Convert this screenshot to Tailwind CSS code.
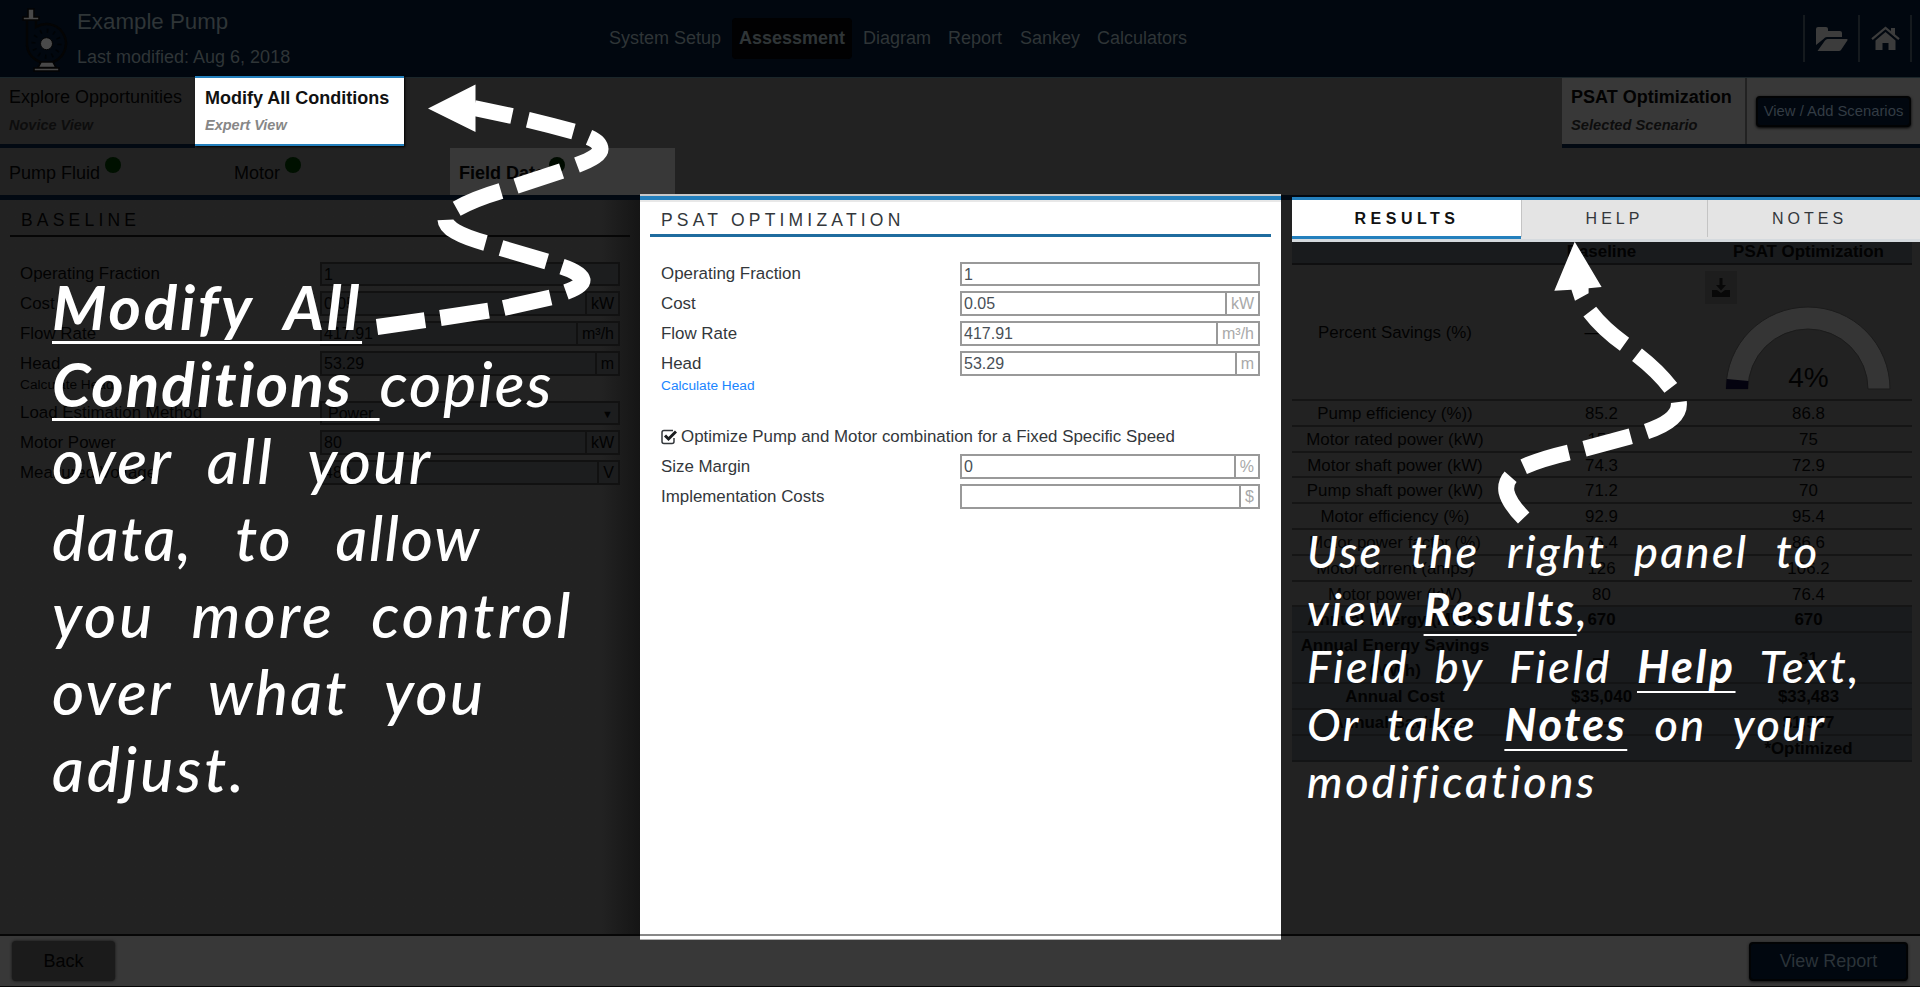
<!DOCTYPE html>
<html lang="en">
<head>
<meta charset="utf-8">
<title>Example Pump - Assessment</title>
<script src="https://cdn.jsdelivr.net/npm/@tailwindcss/browser@4"></script>
</head>
<body class="relative flex h-[987px] w-[1920px] flex-col overflow-hidden bg-[#222222] font-['Liberation_Sans',Arial,sans-serif] text-[16.900px] text-[#020202]">

<!-- Header -->
<header class="flex h-[78px] shrink-0 items-center border-b border-[#1b262a] bg-[#01070f] text-[18px] text-[#2f3537]">
  <svg class="ml-[22px] h-[66px] w-[46px] shrink-0" viewBox="22 4 46 66" fill="none">
    <path d="M27 19V43A19.500 19.500 0 1 0 36 25V19" fill="#01070f" stroke="#040404" stroke-width="2.500"/>
    <circle cx="46.500" cy="41.700" r="13" stroke="#010305" stroke-width="4" stroke-dasharray="1.500 5.300"/>
    <path d="M28 7h6v8h5v3H23v-3h5zM41 60h12l3 5.500H38zM34 66h25v3H34z" fill="#484848" stroke="#040404" stroke-width="1.600"/>
    <circle cx="46.500" cy="41.700" r="6" fill="#4a4a4a" stroke="#040404"/>
  </svg>
  <div class="ml-[9px] w-[524px]">
    <div class="text-[22.300px] leading-[38px]">Example Pump</div>
    <div class="leading-[33px]">Last modified: Aug 6, 2018</div>
  </div>
  <nav class="flex h-[41px] items-center">
    <a class="ml-[8px] w-[123px]">System Setup</a>
    <a class="flex h-[41px] w-[120px] items-center justify-center rounded bg-[#010102] font-bold">Assessment</a>
    <a class="ml-[11px] w-[85px]">Diagram</a>
    <a class="w-[72px]">Report</a>
    <a class="w-[77px]">Sankey</a>
    <a>Calculators</a>
  </nav>
  <div class="ml-auto mr-[8px] flex h-[47px] items-center border-l-2 border-r-2 border-[#151a1e]">
    <div class="flex h-full w-[55px] items-center justify-center border-r-2 border-[#151a1e]">
      <svg class="h-[26px] w-[33px]" viewBox="0 0 33 26" fill="#3c3c3c"><path d="M1 19V3Q1 1 3 1h8q2 0 2 2v2h12q2 0 2 2v4H12q-2 0-3.500 2zM2.500 25 10 14.500q1-1.500 2.500-1.500H32q1 .2.500 1.200L26 24q-.7 1-2 1z"/></svg>
    </div>
    <div class="flex h-full w-[50px] items-center justify-center">
      <svg class="h-[25px] w-[29px]" viewBox="0 0 29 25" fill="#3c3c3c"><path d="M14.500 6 4.500 14.500V24h7v-7h6v7h7v-9.500z"/><path d="M1 13.200 14.500 2 28 13.200" fill="none" stroke="#3c3c3c" stroke-width="2.200"/><path d="M20 2h4v9l-4-3.500z"/></svg>
    </div>
  </div>
</header>

<!-- Condition views -->
<section class="flex h-[70px] shrink-0 leading-[23px]">
  <div class="h-full w-[195px] border-b-4 border-[#020912] pl-[9px] pt-[8px]">
    <div class="text-[18px]">Explore Opportunities</div>
    <div class="mt-[5px] text-[14.500px] font-bold italic text-[#0d0d0d]">Novice View</div>
  </div>
  <div class="relative z-10 -mt-[2px] h-[70px] w-[209px] border-b-[2px] border-t-2 border-[#2480bd] bg-white pl-[10px] pt-[9px] shadow-[1px_1px_2px_#000]">
    <div class="text-[18px] font-bold text-[#111111]">Modify All Conditions</div>
    <div class="mt-[4px] text-[14.500px] font-bold italic text-[#878787]">Expert View</div>
  </div>
  <div class="ml-auto flex h-full w-[358px] border-b-4 border-[#020912] bg-[#383838]">
    <div class="h-full w-[185px] border-r-2 border-[#222222] pl-[9px] pt-[8px]">
      <div class="text-[18px] font-bold">PSAT Optimization</div>
      <div class="mt-[5px] text-[14.700px] font-bold italic text-[#0d0d0d]">Selected Scenario</div>
    </div>
    <div class="ml-[9px] mt-[18px] flex h-[31px] w-[155px] items-center justify-center rounded-sm border-2 border-[#020304] bg-[#01070f] text-[14.800px] text-[#333c44] shadow-[0_1px_3px_#000]">View / Add Scenarios</div>
  </div>
</section>

<!-- Data tabs -->
<section class="flex h-[52px] shrink-0 border-b-[5px] border-[#020912] text-[18px]">
  <div class="flex w-[225px] pl-[9px] pt-[9px] leading-[33px]">Pump Fluid<i class="ml-[5px] size-4 rounded-full bg-[#001000]"></i></div>
  <div class="flex w-[225px] pl-[9px] pt-[9px] leading-[33px]">Motor<i class="ml-[5px] size-4 rounded-full bg-[#001000]"></i></div>
  <div class="flex w-[225px] bg-[#383838] pl-[9px] pt-[9px] font-bold leading-[33px]">Field Data<i class="ml-[4px] size-4 rounded-full bg-[#000b00]"></i></div>
</section>

<main class="flex h-[734px] shrink-0">
  <!-- Baseline -->
  <section class="h-full w-[640px] bg-linear-to-r from-[#222222] from-94% to-[#151515] px-[10px] pt-[7px]">
    <h2 class="h-[30px] border-b-2 border-[#060606] pl-[11px] text-[17.500px] leading-[27px] tracking-[4.200px]">BASELINE</h2>
    <div class="mt-[24.500px] flex flex-col gap-[5px] pl-[10px] pr-[10px]">
      <div class="flex h-[24.800px] items-center justify-between"><label>Operating Fraction</label><div class="h-[24.800px] w-[300px] border-2 border-[#111111] bg-[#1c1d1e] pl-[2px] text-[16px] leading-[21px]">1</div></div>
      <div class="flex h-[24.800px] items-center justify-between"><label>Cost</label><div class="flex h-[24.800px] w-[300px] border-2 border-[#111111] bg-[#1c1d1e] pl-[2px] text-[16px] leading-[21px]">0.05<span class="ml-auto border-l-2 border-[#111111] px-[4px]">kW</span></div></div>
      <div class="flex h-[24.800px] items-center justify-between"><label>Flow Rate</label><div class="flex h-[24.800px] w-[300px] border-2 border-[#111111] bg-[#1c1d1e] pl-[2px] text-[16px] leading-[21px]">417.91<span class="ml-auto border-l-2 border-[#111111] px-[4px]">m³/h</span></div></div>
      <div class="flex h-[24.800px] items-center justify-between"><label>Head</label><div class="flex h-[24.800px] w-[300px] border-2 border-[#111111] bg-[#1c1d1e] pl-[2px] text-[16px] leading-[21px]">53.29<span class="ml-auto border-l-2 border-[#111111] px-[4px]">m</span></div></div>
      <div class="-mt-[5px] h-[20px] text-[13.700px] leading-[18px]">Calculate Head</div>
      <div class="flex h-[24.800px] items-center justify-between"><label>Load Estimation Method</label><div class="flex h-[24.800px] w-[300px] justify-between border-2 border-[#111111] bg-[#1c1d1e] pl-[6px] pr-[5px] text-[16px] leading-[22px]">Power<span class="text-[11px]">▼</span></div></div>
      <div class="flex h-[24.800px] items-center justify-between"><label>Motor Power</label><div class="flex h-[24.800px] w-[300px] border-2 border-[#111111] bg-[#1c1d1e] pl-[2px] text-[16px] leading-[21px]">80<span class="ml-auto border-l-2 border-[#111111] px-[4px]">kW</span></div></div>
      <div class="flex h-[24.800px] items-center justify-between"><label>Measured Voltage</label><div class="flex h-[24.800px] w-[300px] border-2 border-[#111111] bg-[#1c1d1e] pl-[2px] text-[16px] leading-[21px]">480<span class="ml-auto border-l-2 border-[#111111] px-[4px]">V</span></div></div>
    </div>
  </section>

  <!-- PSAT Optimization -->
  <section class="relative z-10 -mt-[6px] h-[746px] w-[641px] border-t-2 border-[#c8c8c8] bg-white text-[#33373b]">
    <div class="h-[4px] bg-[#2480bd]"></div>
    <div class="h-[2px] bg-[#e8e8e8]"></div>
    <div class="px-[10px] pt-[5px]">
      <h2 class="h-[30px] border-b-[3px] border-[#1f6c9f] pl-[11px] text-[17.500px] leading-[27px] tracking-[4.200px]">PSAT OPTIMIZATION</h2>
      <div class="mt-[24.500px] flex flex-col gap-[5px] pl-[11px] pr-[11px]">
        <div class="flex h-[24.800px] items-center justify-between"><label>Operating Fraction</label><div class="h-[24.800px] w-[300px] border-2 border-[#999999] pl-[2px] text-[16px] leading-[21px] text-[#495057]">1</div></div>
        <div class="flex h-[24.800px] items-center justify-between"><label>Cost</label><div class="flex h-[24.800px] w-[300px] border-2 border-[#999999] pl-[2px] text-[16px] leading-[21px] text-[#495057]">0.05<span class="ml-auto border-l-2 border-[#999999] px-[4px] text-[#a9a9a9]">kW</span></div></div>
        <div class="flex h-[24.800px] items-center justify-between"><label>Flow Rate</label><div class="flex h-[24.800px] w-[300px] border-2 border-[#999999] pl-[2px] text-[16px] leading-[21px] text-[#495057]">417.91<span class="ml-auto border-l-2 border-[#999999] px-[4px] text-[#a9a9a9]">m³/h</span></div></div>
        <div class="flex h-[24.800px] items-center justify-between"><label>Head</label><div class="flex h-[24.800px] w-[300px] border-2 border-[#999999] pl-[2px] text-[16px] leading-[21px] text-[#495057]">53.29<span class="ml-auto border-l-2 border-[#999999] px-[4px] text-[#a9a9a9]">m</span></div></div>
        <a class="-mt-[5px] h-[18px] text-[13.700px] leading-[19px] text-[#1a85ff]">Calculate Head</a>
        <div class="mt-[26px] flex h-[24.800px] items-center">
          <svg class="mr-[4px] h-[16px] w-[16px]" viewBox="0 0 16 16" fill="none"><path d="M12 1.500H3Q1 1.500 1 3.500v9q0 2 2 2h8q2 0 2-2V9" stroke="#33373b" stroke-width="1.500"/><path d="M4 6.500 7.500 10 15 2.500" stroke="#1b1e20" stroke-width="3"/></svg>
          Optimize Pump and Motor combination for a Fixed Specific Speed
        </div>
        <div class="flex h-[24.800px] items-center justify-between"><label>Size Margin</label><div class="flex h-[24.800px] w-[300px] border-2 border-[#999999] pl-[2px] text-[16px] leading-[21px] text-[#495057]">0<span class="ml-auto border-l-2 border-[#999999] px-[4px] text-[#a9a9a9]">%</span></div></div>
        <div class="flex h-[24.800px] items-center justify-between"><label>Implementation Costs</label><div class="flex h-[24.800px] w-[300px] border-2 border-[#999999] pl-[2px] text-[16px] leading-[21px]"><span class="ml-auto border-l-2 border-[#999999] px-[4px] text-[#a9a9a9]">$</span></div></div>
      </div>
    </div>
    <div class="absolute inset-x-0 bottom-0 h-[6px] border-b border-t-2 border-b-[#b0b0b0] border-t-[#888888] bg-white"></div>
  </section>

  <!-- Results panel -->
  <section class="h-full w-[639px] pl-[11px]">
    <div class="relative z-10 -mt-[3px] flex h-[45px] w-[628px] border-b-[3px] border-t-[3px] border-b-[#d5dade] border-t-[#2480bd] bg-[#e4e4e4] text-[16px] leading-[37px] text-[#33373b]">
      <div class="h-[39px] w-[229px] border-b-[3px] border-[#2480bd] bg-white pl-[1px] text-center font-bold tracking-[4.500px] text-[#111111]">RESULTS</div>
      <div class="h-[37px] w-[187px] border-l border-r border-[#c4c4c4] text-center tracking-[4px]">HELP</div>
      <div class="w-[203px] text-center tracking-[4px]">NOTES</div>
    </div>
    <div class="grid w-[620px] grid-cols-[206px_207px_207px] text-center leading-[25px]">
      <div class="col-span-3 grid h-[23px] grid-cols-subgrid border-b-2 border-[#0f0f10] bg-[#191b1d] font-bold leading-[20px]"><b></b><b>Baseline</b><b>PSAT Optimization</b></div>
      <div class="col-span-3 grid h-[136px] grid-cols-subgrid border-b-2 border-[#151515]">
        <div class="pt-[55px]">Percent Savings (%)</div>
        <div class="pt-[55px]">&mdash;&mdash;</div>
        <div class="relative">
          <div class="absolute left-0 top-[6px] flex h-[33px] w-[32px] items-center justify-center bg-[#1d1d1d]">
            <svg class="size-5" viewBox="0 0 20 20" fill="#080808"><path d="M8.500 0h3v7H15l-5 5.500L5 7h3.500zM1 12h5l4 3 4-3h5v7H1z"/></svg>
          </div>
          <svg class="absolute left-[20px] top-[41px] h-[84px] w-[166px]" viewBox="-83 -83 166 84"><path d="M-82 0A82 82 0 0 1 82 0H60A60 60 0 0 0-60 0Z" fill="#353535" stroke="#1b1b1b"/><path d="M-82 0A82 82 0 0 1-81.300-10L-59.500-8A60 60 0 0 0-60 0Z" fill="#04030f"/></svg>
          <span class="absolute inset-x-0 top-[99px] text-[28px] leading-[28px]">4%</span>
        </div>
      </div>
      <div class="col-span-3 grid h-[25.800px] grid-cols-subgrid border-b-2 border-[#151515]"><span>Pump efficiency (%))</span><span>85.2</span><span>86.8</span></div>
      <div class="col-span-3 grid h-[25.800px] grid-cols-subgrid border-b-2 border-[#151515]"><span>Motor rated power (kW)</span><span>150</span><span>75</span></div>
      <div class="col-span-3 grid h-[25.800px] grid-cols-subgrid border-b-2 border-[#151515]"><span>Motor shaft power (kW)</span><span>74.3</span><span>72.9</span></div>
      <div class="col-span-3 grid h-[25.800px] grid-cols-subgrid border-b-2 border-[#151515]"><span>Pump shaft power (kW)</span><span>71.2</span><span>70</span></div>
      <div class="col-span-3 grid h-[25.800px] grid-cols-subgrid border-b-2 border-[#151515]"><span>Motor efficiency (%)</span><span>92.9</span><span>95.4</span></div>
      <div class="col-span-3 grid h-[25.800px] grid-cols-subgrid border-b-2 border-[#151515]"><span>Motor power factor (%)</span><span>76.4</span><span>86.6</span></div>
      <div class="col-span-3 grid h-[25.800px] grid-cols-subgrid border-b-2 border-[#151515]"><span>Motor current (amps)</span><span>126</span><span>106.2</span></div>
      <div class="col-span-3 grid h-[25.800px] grid-cols-subgrid border-b-2 border-[#151515]"><span>Motor power (kW)</span><span>80</span><span>76.4</span></div>
      <div class="col-span-3 grid grid-cols-subgrid bg-[#191b1d] font-bold">
        <div class="col-span-3 grid h-[25.800px] grid-cols-subgrid border-b-2 border-[#131415]"><span>Annual Energy (MWh)</span><span>670</span><span>670</span></div>
        <div class="col-span-3 grid h-[51px] grid-cols-subgrid items-center border-b-2 border-[#131415]"><span class="px-2">Annual Energy Savings (MWh)</span><span>&mdash;</span><span>31</span></div>
        <div class="col-span-3 grid h-[25.800px] grid-cols-subgrid border-b-2 border-[#131415]"><span>Annual Cost</span><span>$35,040</span><span>$33,483</span></div>
        <div class="col-span-3 grid h-[25.800px] grid-cols-subgrid border-b-2 border-[#131415]"><span>Annual Savings</span><span>&mdash;</span><span>$1,557</span></div>
        <div class="col-span-3 grid h-[25.800px] grid-cols-subgrid border-b-2 border-[#131415]"><span></span><span></span><span>*Optimized</span></div>
      </div>
    </div>
  </section>
</main>

<!-- Footer -->
<footer class="flex h-[53px] shrink-0 items-center justify-between border-b border-t-2 border-[#060606] bg-[#383838] px-[12px] text-[18px]">
  <div class="flex h-[40px] w-[103px] items-center justify-center rounded bg-[#1b1b1b] shadow-[0_0_3px_#111]">Back</div>
  <div class="flex h-[39px] w-[159px] items-center justify-center rounded-sm border-2 border-[#020304] bg-[#01070f] text-[#2b3339] shadow-[0_1px_3px_#111]">View Report</div>
</footer>

<!-- Tutorial notes -->
<div class="absolute left-[52px] top-[268px] z-20 whitespace-nowrap font-['Lato',sans-serif] text-[62px] font-medium italic leading-[77px] text-white">
  <div class="font-bold tracking-[2.800px] [word-spacing:16px]"><u class="decoration-[3px] underline-offset-[11px] [text-decoration-skip-ink:none]">Modify All</u></div>
  <div class="tracking-[2px] [word-spacing:11px]"><u class="font-bold decoration-[3px] underline-offset-[11px] [text-decoration-skip-ink:none]">Conditions </u>copies</div>
  <div class="tracking-[2.400px] [word-spacing:18px]">over all your</div>
  <div class="tracking-[1.700px] [word-spacing:27px]">data, to allow</div>
  <div class="tracking-[3px] [word-spacing:19px]">you more control</div>
  <div class="tracking-[2.300px] [word-spacing:20px]">over what you</div>
  <div class="tracking-[3px]">adjust.</div>
</div>
<div class="absolute left-[1307px] top-[523px] z-20 whitespace-nowrap font-['Lato',sans-serif] text-[45px] font-medium italic leading-[57.500px] text-white">
  <div class="tracking-[2.300px] [word-spacing:15px]">Use the right panel to</div>
  <div class="tracking-[2.500px] [word-spacing:8px]">view <u class="font-bold decoration-2 underline-offset-[8px] [text-decoration-skip-ink:none]">Results</u>,</div>
  <div class="tracking-[2.500px] [word-spacing:12.500px]">Field by Field <u class="font-bold decoration-2 underline-offset-[8px] [text-decoration-skip-ink:none]">Help</u> Text,</div>
  <div class="tracking-[2.400px] [word-spacing:14.500px]">Or take <u class="font-bold decoration-2 underline-offset-[8px] [text-decoration-skip-ink:none]">Notes</u> on your</div>
  <div class="tracking-[2.800px]">modifications</div>
</div>
<svg class="absolute inset-0 z-20 h-[987px] w-[1920px]" viewBox="0 0 1920 987" fill="none" stroke="#ffffff" stroke-width="16">
  <path d="M377 327 425 320.200M440.400 318 488.600 310.700M503.700 308 550.600 297.500M566 292Q583 286 582.500 280Q581 273 562 266.700M546.700 261.500 501 248M485.500 243Q446 232 445.500 219.800M456.700 208.700Q474 199 501 191M516 186 561.600 171M577 165Q601 156 600.500 149Q600 142 589 137.300M573.500 131.500Q550 125 527.800 119.700M512 116 474 108"/>
  <path d="M1589.800 311.700Q1603 329 1624.500 344.200M1637 354.700Q1658 371 1670.800 387.800M1678.800 402Q1681 420 1646.500 431.500M1630.800 436.300 1584.500 448.700M1568.800 452.500Q1541 459 1523.700 466.700M1510.600 476.700Q1505 483 1506.500 492Q1509 503 1523.700 518"/>
  <path d="M428 108.500 475.500 84.500V132zM1574.700 241.700 1601.600 287 1588.600 288.300V293.300L1575 300.700 1571.400 289.700 1554.300 290.700z" fill="#ffffff" stroke="none"/>
</svg>
</body>
</html>
